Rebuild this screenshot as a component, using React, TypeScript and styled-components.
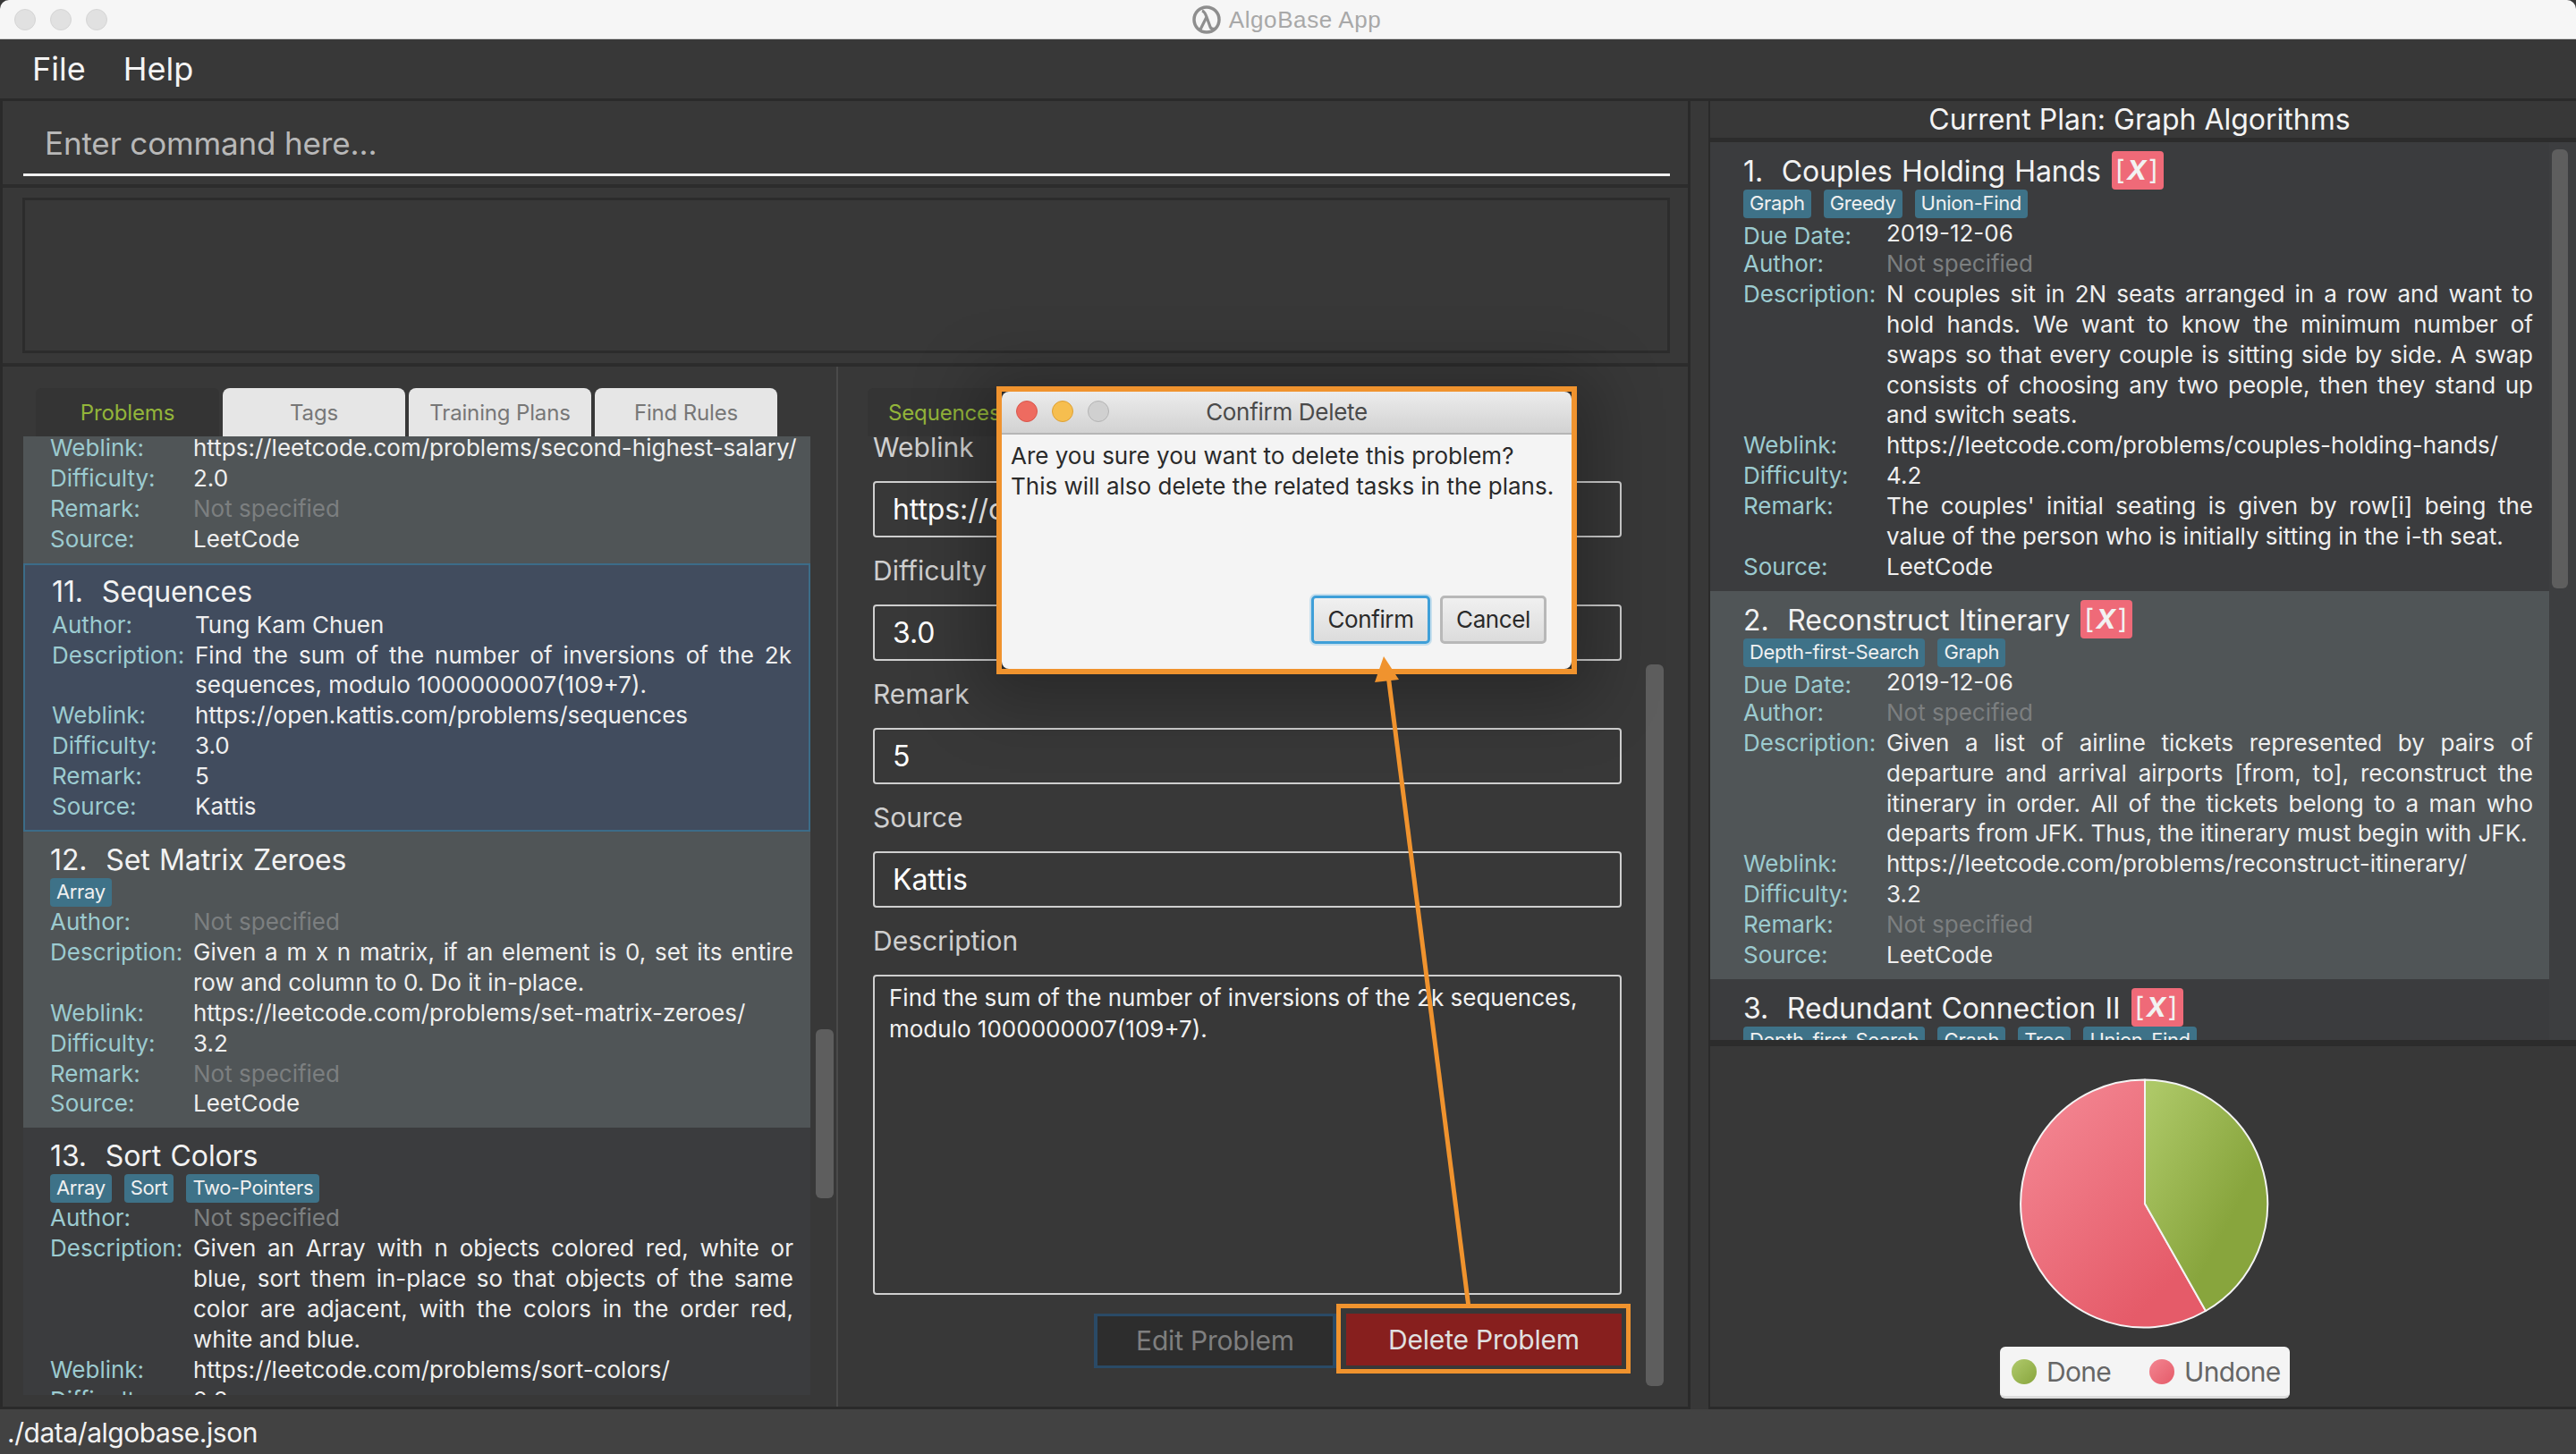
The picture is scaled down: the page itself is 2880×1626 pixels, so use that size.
import React from "react";
import styled, { createGlobalStyle } from "styled-components";

const GlobalStyle = createGlobalStyle`
  html, body {
    margin: 0;
    padding: 0;
    width: 2880px;
    height: 1626px;
    overflow: hidden;
    background: #ffffff;
  }
  * { box-sizing: border-box; }
`;

type Field = { label: string; value: string; muted?: boolean; long?: boolean };
type Problem = {
  title: string;
  tags?: string[];
  fields: Field[];
  selected?: boolean;
  tone: "light" | "dark" | "blue";
};

const NS = "Not specified";

const problems: Problem[] = [
  {
    title: "",
    tone: "light",
    fields: [
      { label: "Weblink:", value: "https://leetcode.com/problems/second-highest-salary/" },
      { label: "Difficulty:", value: "2.0" },
      { label: "Remark:", value: NS, muted: true },
      { label: "Source:", value: "LeetCode" },
    ],
  },
  {
    title: "11.  Sequences",
    tone: "blue",
    selected: true,
    fields: [
      { label: "Author:", value: "Tung Kam Chuen" },
      {
        label: "Description:",
        long: true,
        value: "Find the sum of the number of inversions of the 2k sequences, modulo 1000000007(109+7).",
      },
      { label: "Weblink:", value: "https://open.kattis.com/problems/sequences" },
      { label: "Difficulty:", value: "3.0" },
      { label: "Remark:", value: "5" },
      { label: "Source:", value: "Kattis" },
    ],
  },
  {
    title: "12.  Set Matrix Zeroes",
    tone: "light",
    tags: ["Array"],
    fields: [
      { label: "Author:", value: NS, muted: true },
      {
        label: "Description:",
        long: true,
        value: "Given a m x n matrix, if an element is 0, set its entire row and column to 0. Do it in-place.",
      },
      { label: "Weblink:", value: "https://leetcode.com/problems/set-matrix-zeroes/" },
      { label: "Difficulty:", value: "3.2" },
      { label: "Remark:", value: NS, muted: true },
      { label: "Source:", value: "LeetCode" },
    ],
  },
  {
    title: "13.  Sort Colors",
    tone: "dark",
    tags: ["Array", "Sort", "Two-Pointers"],
    fields: [
      { label: "Author:", value: NS, muted: true },
      {
        label: "Description:",
        long: true,
        value:
          "Given an Array with n objects colored red, white or blue, sort them in-place so that objects of the same color are adjacent, with the colors in the order red, white and blue.",
      },
      { label: "Weblink:", value: "https://leetcode.com/problems/sort-colors/" },
      { label: "Difficulty:", value: "2.8" },
    ],
  },
];

const tasks: Problem[] = [
  {
    title: "1.  Couples Holding Hands",
    tone: "dark",
    tags: ["Graph", "Greedy", "Union-Find"],
    fields: [
      { label: "Author:", value: NS, muted: true },
      {
        label: "Description:",
        long: true,
        value:
          "N couples sit in 2N seats arranged in a row and want to hold hands. We want to know the minimum number of swaps so that every couple is sitting side by side. A swap consists of choosing any two people, then they stand up and switch seats.",
      },
      { label: "Weblink:", value: "https://leetcode.com/problems/couples-holding-hands/" },
      { label: "Difficulty:", value: "4.2" },
      {
        label: "Remark:",
        long: true,
        value:
          "The couples' initial seating is given by row[i] being the value of the person who is initially sitting in the i-th seat.",
      },
      { label: "Source:", value: "LeetCode" },
    ],
  },
  {
    title: "2.  Reconstruct Itinerary",
    tone: "light",
    tags: ["Depth-first-Search", "Graph"],
    fields: [
      { label: "Author:", value: NS, muted: true },
      {
        label: "Description:",
        long: true,
        value:
          "Given a list of airline tickets represented by pairs of departure and arrival airports [from, to], reconstruct the itinerary in order. All of the tickets belong to a man who departs from JFK. Thus, the itinerary must begin with JFK.",
      },
      { label: "Weblink:", value: "https://leetcode.com/problems/reconstruct-itinerary/" },
      { label: "Difficulty:", value: "3.2" },
      { label: "Remark:", value: NS, muted: true },
      { label: "Source:", value: "LeetCode" },
    ],
  },
  {
    title: "3.  Redundant Connection II",
    tone: "dark",
    tags: ["Depth-first-Search", "Graph", "Tree", "Union-Find"],
    fields: [],
  },
];

const editFields = [
  { label: "Weblink", value: "https://open.kattis.com/problems/sequences" },
  { label: "Difficulty", value: "3.0" },
  { label: "Remark", value: "5" },
  { label: "Source", value: "Kattis" },
];

const FieldRows = ({ fields }: { fields: Field[] }) => (
  <>
    {fields.map((f) => (
      <FieldRow key={f.label}>
        <FieldLabel>{f.label}</FieldLabel>
        <FieldValue $muted={f.muted} $long={f.long}>
          {f.value}
        </FieldValue>
      </FieldRow>
    ))}
  </>
);

const TagList = ({ tags }: { tags: string[] }) => (
  <TagRow>
    {tags.map((t) => (
      <Tag key={t}>{t}</Tag>
    ))}
  </TagRow>
);

const Logo = () => (
  <svg width="32" height="32" viewBox="0 0 32 32">
    <circle cx="16" cy="16" r="14" fill="none" stroke="#8e8e8e" strokeWidth="3.5" />
    <path d="M9 27 L16 13 Q14 7 11 6 M16 13 L20 24 Q21 27 25 26" fill="none" stroke="#8e8e8e" strokeWidth="3.2" />
  </svg>
);

const PieChart = () => (
  <svg width="284" height="284" viewBox="0 0 284 284">
    <defs>
      <linearGradient id="doneFill" x1="0.1" y1="0" x2="0.7" y2="0.6">
        <stop offset="0" stopColor="#adc867" />
        <stop offset="1" stopColor="#88a53d" />
      </linearGradient>
      <linearGradient id="undoneFill" x1="0.1" y1="0.1" x2="0.7" y2="0.9">
        <stop offset="0" stopColor="#f38591" />
        <stop offset="1" stopColor="#e55b69" />
      </linearGradient>
    </defs>
    <path
      d="M142 142 L142 3.5 A138 138.5 0 1 0 210 262 Z"
      fill="url(#undoneFill)"
      stroke="#f4f4f4"
      strokeWidth="2"
      strokeLinejoin="round"
    />
    <path
      d="M142 142 L142 3.5 A138 138.5 0 0 1 210 262 Z"
      fill="url(#doneFill)"
      stroke="#f4f4f4"
      strokeWidth="2"
      strokeLinejoin="round"
    />
  </svg>
);

const App: React.FC = () => (
  <Window>
    <GlobalStyle />
    <TitleBar>
      <TrafficLights>
        <Light />
        <Light />
        <Light />
      </TrafficLights>
      <WindowTitle>
        <Logo />
        AlgoBase App
      </WindowTitle>
    </TitleBar>

    <MenuBar>
      <MenuItem>File</MenuItem>
      <MenuItem>Help</MenuItem>
    </MenuBar>

    <Content>
      <LeftColumn>
        <CommandPane>
          <CommandInput>Enter command here...</CommandInput>
        </CommandPane>
        <ResultPane>
          <ResultBox />
        </ResultPane>
        <MainPane>
          <ProblemsColumn>
            <TabStrip>
              <ActiveTab>Problems</ActiveTab>
              <Tab>Tags</Tab>
              <Tab>Training Plans</Tab>
              <Tab>Find Rules</Tab>
            </TabStrip>
            <ListViewport>
              <ProblemList>
                {problems.map((p, i) => (
                  <ProblemCard key={i} $tone={p.tone} $selected={p.selected}>
                    {p.title && <CardTitle>{p.title}</CardTitle>}
                    {p.tags && <TagList tags={p.tags} />}
                    <FieldRows fields={p.fields} />
                  </ProblemCard>
                ))}
              </ProblemList>
              <ListScrollThumb />
            </ListViewport>
          </ProblemsColumn>

          <DetailColumn>
            <TabStrip $flush>
              <DetailTab>Sequences</DetailTab>
            </TabStrip>
            <DetailForm>
              {editFields.map((f) => (
                <FormGroup key={f.label}>
                  <FormLabel>{f.label}</FormLabel>
                  <FormInput>{f.value}</FormInput>
                </FormGroup>
              ))}
              <FormGroup>
                <FormLabel>Description</FormLabel>
                <FormTextArea>
                  Find the sum of the number of inversions of the 2k sequences, modulo 1000000007(109+7).
                </FormTextArea>
              </FormGroup>
              <FormActions>
                <EditButton>Edit Problem</EditButton>
                <DeleteHighlight>
                  <DeleteButton>Delete Problem</DeleteButton>
                </DeleteHighlight>
              </FormActions>
            </DetailForm>
            <DetailScrollThumb />
          </DetailColumn>
        </MainPane>
      </LeftColumn>

      <RightColumn>
        <PlanHeader>Current Plan: Graph Algorithms</PlanHeader>
        <TaskViewport>
          {tasks.map((t) => (
            <TaskCard key={t.title} $tone={t.tone}>
              <TaskTitleRow>
                <CardTitle>{t.title}</CardTitle>
                <RemoveBadge>[<RemoveX>X</RemoveX>]</RemoveBadge>
              </TaskTitleRow>
              {t.tags && <TagList tags={t.tags} />}
              {t.fields.length > 0 && (
                <FieldRow>
                  <DueLabel>Due Date:</DueLabel>
                  <FieldValue>2019-12-06</FieldValue>
                </FieldRow>
              )}
              <FieldRows fields={t.fields} />
            </TaskCard>
          ))}
          <TaskScrollThumb />
        </TaskViewport>
        <ChartPane>
          <PieChart />
          <Legend>
            <LegendItem>
              <LegendDot $tone="done" />
              Done
            </LegendItem>
            <LegendItem>
              <LegendDot $tone="undone" />
              Undone
            </LegendItem>
          </Legend>
        </ChartPane>
      </RightColumn>
    </Content>

    <StatusBar>./data/algobase.json</StatusBar>

    <Dialog>
      <DialogTitleBar>
        <DialogLights>
          <DialogLight $color="#ee6b60" $edge="#d9564b" />
          <DialogLight $color="#f6be4f" $edge="#dea034" />
          <DialogLight $color="#d0d0d0" $edge="#b4b4b4" />
        </DialogLights>
        Confirm Delete
      </DialogTitleBar>
      <DialogBody>
        <DialogMessage>
          Are you sure you want to delete this problem?
          <br />
          This will also delete the related tasks in the plans.
        </DialogMessage>
        <DialogActions>
          <ConfirmButton>Confirm</ConfirmButton>
          <CancelButton>Cancel</CancelButton>
        </DialogActions>
      </DialogBody>
    </Dialog>

    <ArrowLayer width="2880" height="1626" viewBox="0 0 2880 1626">
      <line x1="1642" y1="1462" x2="1552" y2="755" stroke="#f0932e" strokeWidth="5" />
      <path d="M1547 734 L1537 763 L1564 760 Z" fill="#f0932e" />
    </ArrowLayer>
  </Window>
);

export default App;

const uiFont = `Inter, "Noto Sans", "Liberation Sans", sans-serif`;

const toneColors = {
  light: "#505557",
  dark: "#3b3c3e",
  blue: "#414c5e",
};

const Window = styled.div`
  position: relative;
  width: 2880px;
  height: 1626px;
  display: flex;
  flex-direction: column;
  overflow: hidden;
  background: #383838;
  font-family: ${uiFont};
  color: #fff;
`;

const TitleBar = styled.div`
  position: relative;
  flex: 0 0 44px;
  display: flex;
  align-items: center;
  justify-content: center;
  padding: 1px 3px 0 0;
  background: #f6f6f6;
  border-bottom: 1px solid #cfcfcf;
  border-radius: 10px 10px 0 0;
`;

const TrafficLights = styled.div`
  position: absolute;
  left: 16px;
  top: 10px;
  display: flex;
  gap: 16px;
`;

const Light = styled.span`
  width: 24px;
  height: 24px;
  border-radius: 50%;
  background: #e1e1e1;
  border: 1px solid #d5d5d5;
`;

const WindowTitle = styled.div`
  display: flex;
  align-items: center;
  gap: 9px;
  font-size: 26px;
  color: #a8a8a8;
  font-family: "Liberation Sans", sans-serif;
  letter-spacing: 0.6px;
`;

const MenuBar = styled.div`
  flex: 0 0 69px;
  display: flex;
  align-items: center;
  gap: 42px;
  padding-left: 36px;
  border-bottom: 3px solid #2a2a2a;
`;

const MenuItem = styled.div`
  font-size: 36px;
  color: #f4f4f4;
`;

const Content = styled.div`
  flex: 1;
  min-height: 0;
  display: flex;
`;

const LeftColumn = styled.div`
  width: 1890px;
  display: flex;
  flex-direction: column;
  border-left: 3px solid #2a2a2a;
  border-right: 3px solid #2a2a2a;
`;

const CommandPane = styled.div`
  flex: 0 0 97px;
  padding: 0 20px 0 23px;
  border-bottom: 4px solid #2c2c2c;
`;

const CommandInput = styled.div`
  height: 84px;
  padding: 27px 0 0 24px;
  font-size: 35px;
  line-height: 40px;
  letter-spacing: -0.15px;
  color: #b8b8b8;
  border-bottom: 3px solid #f2f2f2;
`;

const ResultPane = styled.div`
  flex: 0 0 200px;
  padding: 11px 20px 11px 22px;
  border-bottom: 4px solid #2c2c2c;
`;

const ResultBox = styled.div`
  height: 100%;
  border: 3px solid #2c2c2c;
`;

const MainPane = styled.div`
  flex: 1;
  min-height: 0;
  display: flex;
  border-bottom: 3px solid #2a2a2a;
`;

const ProblemsColumn = styled.div`
  width: 934px;
  padding-left: 23px;
  padding-top: 24px;
  display: flex;
  flex-direction: column;
  border-right: 2px solid #4a4a4a;
`;

const TabStrip = styled.div<{ $flush?: boolean }>`
  flex: 0 0 54px;
  height: 54px;
  display: flex;
  gap: 4px;
  padding-left: ${(p) => (p.$flush ? 0 : 14)}px;
`;

const ActiveTab = styled.div`
  width: 205px;
  background: #343434;
  border-radius: 6px 6px 0 0;
  color: #93b53a;
  font-size: 24px;
  letter-spacing: -0.15px;
  line-height: 56px;
  text-align: center;
`;

const DetailTab = styled(ActiveTab)`
  width: 200px;
  padding-left: 23px;
  text-align: left;
`;

const Tab = styled.div`
  width: 204px;
  background: #e6e6e6;
  border-radius: 8px 8px 0 0;
  color: #777;
  font-size: 24px;
  letter-spacing: -0.15px;
  line-height: 56px;
  text-align: center;
`;

const ListViewport = styled.div`
  position: relative;
  flex: 1;
  min-height: 0;
  margin-bottom: 13px;
  overflow: hidden;
`;

const ProblemList = styled.div`
  width: 880px;
  margin-top: -14px;
`;

const Card = styled.div<{ $tone: "light" | "dark" | "blue" }>`
  background: ${(p) => toneColors[p.$tone]};
`;

const ProblemCard = styled(Card)<{ $selected?: boolean }>`
  padding: ${(p) => (p.$selected ? "8px 19px 9px 30px" : "10px 19px 10px 30px")};
  border: ${(p) => (p.$selected ? "2px solid #3c6c88" : "none")};
`;

const CardTitle = styled.div`
  height: 42px;
  font-size: 32px;
  line-height: 44px;
  letter-spacing: -0.1px;
  word-spacing: 1.5px;
  color: #f2f2f2;
  white-space: pre;
`;

const TagRow = styled.div`
  display: flex;
  gap: 14px;
  height: 32px;
`;

const Tag = styled.span`
  height: 32px;
  padding: 0 7px;
  background: #3e7288;
  border-radius: 4px;
  font-size: 22px;
  line-height: 31px;
  letter-spacing: -0.35px;
  color: #f0f0f0;
`;

const FieldRow = styled.div`
  display: flex;
  font-size: 26px;
  line-height: 33.9px;
`;

const FieldLabel = styled.div`
  flex: 0 0 160px;
  color: #9ccbd0;
`;

const DueLabel = styled(FieldLabel)`
  position: relative;
  top: 3px;
`;

const FieldValue = styled.div<{ $muted?: boolean; $long?: boolean }>`
  flex: 1;
  min-width: 0;
  color: ${(p) => (p.$muted ? "#7c7f80" : "#efefef")};
  text-align: ${(p) => (p.$long ? "justify" : "left")};
  white-space: ${(p) => (p.$long ? "normal" : "nowrap")};
`;

const ScrollThumb = styled.div`
  position: absolute;
  background: #5e5e5e;
  border-radius: 6px;
`;

const ListScrollThumb = styled(ScrollThumb)`
  left: 886px;
  top: 663px;
  width: 20px;
  height: 189px;
`;

const DetailColumn = styled.div`
  position: relative;
  flex: 1;
  padding: 24px 0 0 33px;
`;

const DetailForm = styled.div`
  width: 837px;
  margin: -6px 0 0 6px;
`;

const FormGroup = styled.div`
  display: flex;
  flex-direction: column;
`;

const FormLabel = styled.div`
  height: 56px;
  font-size: 30px;
  line-height: 36px;
  color: #cfcfcf;
`;

const FormInput = styled.div`
  height: 63px;
  margin-bottom: 19px;
  padding-left: 20px;
  border: 2.5px solid #cfcfcf;
  border-radius: 4px;
  font-size: 32px;
  line-height: 60px;
  letter-spacing: -0.1px;
  color: #fff;
  white-space: nowrap;
  overflow: hidden;
`;

const FormTextArea = styled.div`
  height: 358px;
  padding: 6px 16px;
  border: 2.5px solid #cfcfcf;
  border-radius: 4px;
  font-size: 26px;
  line-height: 35px;
  color: #f2f2f2;
`;

const FormActions = styled.div`
  position: relative;
  display: flex;
  justify-content: flex-end;
  align-items: center;
  height: 78px;
  margin: 10px -10px 0 0;
`;

const EditButton = styled.div`
  width: 271px;
  height: 61px;
  margin-top: 4px;
  background: #2d2d2d;
  border: 3px solid #2a4a66;
  border-left-width: 4px;
  border-right-width: 4px;
  font-size: 30px;
  line-height: 55px;
  letter-spacing: -0.2px;
  text-align: center;
  color: #7f7f7f;
`;

const DeleteHighlight = styled.div`
  width: 329px;
  height: 78px;
  padding: 5px 5px 5px 6px;
  border: 5px solid #f0932e;
`;

const DeleteButton = styled.div`
  height: 100%;
  background: #871f1e;
  margin-top: 1px;
  font-size: 30px;
  line-height: 58px;
  letter-spacing: -0.2px;
  text-align: center;
  color: #e0e0e0;
`;

const DetailScrollThumb = styled(ScrollThumb)`
  left: 903px;
  top: 333px;
  width: 20px;
  height: 807px;
`;

const RightColumn = styled.div`
  flex: 1;
  min-width: 0;
  margin-left: 20px;
  display: flex;
  flex-direction: column;
  border-left: 2px solid #2a2a2a;
  border-bottom: 3px solid #2a2a2a;
`;

const PlanHeader = styled.div`
  flex: 0 0 45px;
  text-align: center;
  padding-right: 8px;
  padding-top: 1px;
  font-size: 32px;
  line-height: 40px;
  color: #f4f4f4;
  border-bottom: 5px solid #2c2c2c;
`;

const TaskViewport = styled.div`
  position: relative;
  flex: 0 0 1004px;
  padding-right: 30px;
  overflow: hidden;
  background: #3d3e40;
`;

const TaskCard = styled(Card)`
  padding: 11px 18px 10px 37px;
`;

const TaskTitleRow = styled.div`
  display: flex;
  align-items: flex-start;
  gap: 12px;
`;

const RemoveBadge = styled.span`
  width: 58px;
  height: 43px;
  margin-top: -1px;
  background: #ef6a78;
  border-radius: 4px;
  color: #f2f2f2;
  font-size: 30px;
  letter-spacing: 2px;
  line-height: 43px;
  text-align: center;
`;

const RemoveX = styled.span`
  font-weight: 700;
  font-style: italic;
`;

const TaskScrollThumb = styled(ScrollThumb)`
  left: 941px;
  top: 8px;
  width: 18px;
  height: 491px;
`;

const ChartPane = styled.div`
  flex: 1;
  display: flex;
  flex-direction: column;
  align-items: center;
  padding: 34px 0 0 4px;
  border-top: 7px solid #2c2c2c;
`;

const Legend = styled.div`
  display: flex;
  align-items: center;
  gap: 43px;
  width: 324px;
  height: 58px;
  margin-top: 18px;
  padding-left: 13px;
  background: #f4f4f4;
  border-radius: 6px;
  border-bottom: 3px solid #dcdcdc;
  color: #666;
`;

const LegendItem = styled.div`
  display: flex;
  align-items: center;
  gap: 11px;
  font-size: 30px;
  letter-spacing: -0.7px;
`;

const LegendDot = styled.span<{ $tone: "done" | "undone" }>`
  width: 28px;
  height: 28px;
  border-radius: 50%;
  background: ${(p) =>
    p.$tone === "done"
      ? "linear-gradient(135deg, #b0ca6c, #88a53d)"
      : "linear-gradient(135deg, #f38591, #e55b69)"};
`;

const StatusBar = styled.div`
  flex: 0 0 50px;
  padding: 6px 0 0 8px;
  background: #424242;
  font-size: 30px;
  line-height: 40px;
  letter-spacing: -0.45px;
  color: #f2f2f2;
`;

const Dialog = styled.div`
  position: absolute;
  left: 1114px;
  top: 432px;
  width: 649px;
  height: 322px;
  display: flex;
  flex-direction: column;
  border: 6px solid #f0932e;
  background: #2c2c2c;
  box-shadow: 0 10px 70px 20px rgba(0, 0, 0, 0.28);
`;

const DialogTitleBar = styled.div`
  position: relative;
  flex: 0 0 43px;
  background: linear-gradient(#ececec, #d2d2d2);
  border-bottom: 2px solid #b6b6b6;
  border-radius: 8px 8px 0 0;
  font-size: 26px;
  line-height: 46px;
  letter-spacing: -0.3px;
  text-align: center;
  color: #4a4a4a;
`;

const DialogLights = styled.div`
  position: absolute;
  left: 16px;
  top: 10px;
  display: flex;
  gap: 16px;
`;

const DialogLight = styled.span<{ $color: string; $edge: string }>`
  width: 24px;
  height: 24px;
  border-radius: 50%;
  background: ${(p) => p.$color};
  border: 1px solid ${(p) => p.$edge};
`;

const DialogBody = styled.div`
  flex: 1;
  display: flex;
  flex-direction: column;
  justify-content: space-between;
  padding: 7px 28px 28px 10px;
  background: #f4f4f4;
  border-radius: 0 0 8px 8px;
`;

const DialogMessage = styled.div`
  font-size: 26px;
  line-height: 34px;
  color: #2a2a2a;
  white-space: nowrap;
`;

const DialogActions = styled.div`
  display: flex;
  justify-content: flex-end;
  gap: 11px;
`;

const DialogButton = styled.div`
  height: 54px;
  border-radius: 5px;
  background: linear-gradient(#f0f0f0, #dcdcdc);
  font-size: 26px;
  line-height: 48px;
  letter-spacing: -0.4px;
  text-align: center;
  color: #2a2a2a;
`;

const ConfirmButton = styled(DialogButton)`
  width: 133px;
  border: 3px solid #3f9fd8;
  box-shadow: 0 0 0 2px rgba(63, 159, 216, 0.25);
`;

const CancelButton = styled(DialogButton)`
  width: 119px;
  border: 3px solid #b8b8b8;
`;

const ArrowLayer = styled.svg`
  position: absolute;
  left: 0;
  top: 0;
  pointer-events: none;
`;
